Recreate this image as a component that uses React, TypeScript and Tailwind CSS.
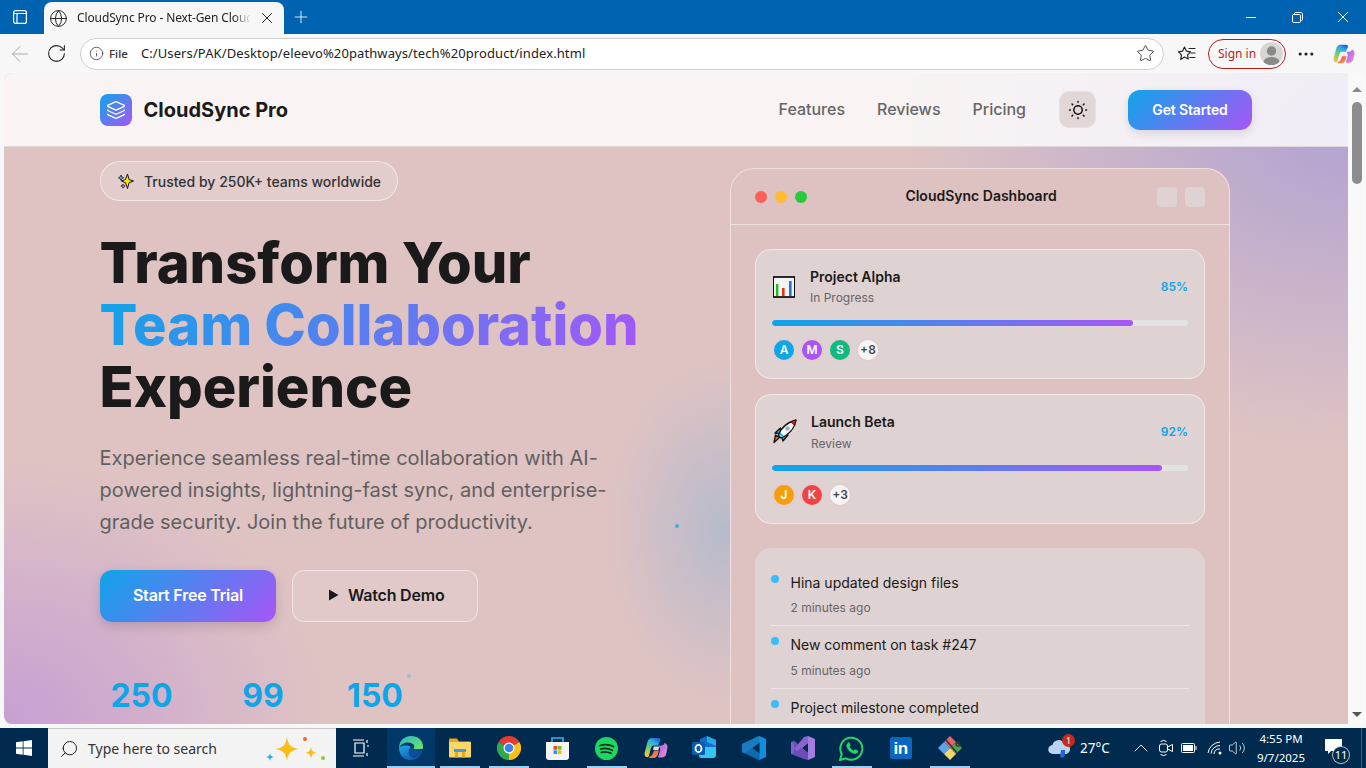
import React from "react";
import { Layers, Globe, X, Plus, ArrowLeft, RotateCw, Info, Star, MoreHorizontal, ChevronUp, Search, Volume2 } from "lucide-react";

const grad = "bg-[linear-gradient(135deg,#0ea5e9,#a855f7)]";

function SunDots() {
  return (
    <svg width="20" height="20" viewBox="0 0 20 20" fill="none" stroke="#111" strokeWidth="1.5" strokeLinecap="round">
      <circle cx="10" cy="10" r="4.2" />
      <path d="M10 1.500v.8M10 17.700v.8M1.500 10h.8M17.700 10h.8M4 4l.6.6M15.400 15.400l.6.6M4 16l.6-.6M15.400 4.600l.6-.6" />
    </svg>
  );
}

function ChartEmoji() {
  return (
    <svg width="22" height="22" viewBox="0 0 22 22">
      <rect x="0.5" y="1" width="21" height="20" fill="#f4f4f4" stroke="#111" strokeWidth="1" />
      <path d="M0 1h22M0 21h22" stroke="#111" strokeWidth="1.600" />
      <rect x="3" y="8" width="2.4" height="12" fill="#17c317" />
      <rect x="9" y="12" width="2.6" height="8" fill="#e8321a" />
      <rect x="16" y="5" width="2.6" height="15" fill="#1c74d4" />
    </svg>
  );
}

function RocketEmoji() {
  return (
    <svg width="25" height="25" viewBox="0 0 25 25">
      <path d="M7.500 18.500 L2 23.500 L3.500 16 Z" fill="#f97316" stroke="#111" strokeWidth="1.300" strokeLinejoin="round" />
      <path d="M3 14 L8.500 9 L9 15Z" fill="#14b0e6" stroke="#111" strokeWidth="1.300" strokeLinejoin="round" />
      <path d="M11 22 L16 16 L9.500 17Z" fill="#14b0e6" stroke="#111" strokeWidth="1.300" strokeLinejoin="round" />
      <path d="M6.500 16.500 C8.500 9.500 15 3.500 24 1 C22.500 10 16 16.500 9 19 Z" fill="#f4f8fa" stroke="#111" strokeWidth="1.300" strokeLinejoin="round" />
      <path d="M18.500 2.800 L24 1 L22.700 6.600 C21.500 5 20 3.800 18.500 2.800 Z" fill="#e01b1b" stroke="#111" strokeWidth="0.800" />
      <circle cx="15.500" cy="9.500" r="2.300" fill="#a7b1b8" />
      <path d="M8 14.500 L11 17.500" stroke="#14b0e6" strokeWidth="1.800" />
    </svg>
  );
}

function SparkleEmoji() {
  return (
    <svg width="16" height="17" viewBox="0 0 16 17">
      <path d="M9.500 1 L11 6.500 L15.500 8 L11 9.800 L9.500 15.500 L7.500 9.800 L3.500 8 L7.500 6.500 Z" fill="#ffe600" stroke="#111" strokeWidth="1" />
      <path d="M3 2 L3.900 4 L5.800 4.800 L3.900 5.600 L3 7.600 L2.100 5.600 L.4 4.800 L2.100 4 Z" fill="#28c6e8" stroke="#111" strokeWidth=".7" />
      <path d="M5 11 L5.700 12.400 L7.100 13 L5.700 13.700 L5 15.200 L4.200 13.700 L2.800 13 L4.200 12.400 Z" fill="#ef7fb0" stroke="#111" strokeWidth=".7" />
    </svg>
  );
}

function Avatar({ c, t, white }: { c: string; t: string; white?: boolean }) {
  return (
    <div className={`w-[24px] h-[24px] rounded-full border-2 border-[#e3cdcd] flex items-center justify-center text-[12px] font-semibold ${white ? "text-[#444]" : "text-white"} ${c}`}>{t}</div>
  );
}

function ProjectCard({ icon, name, status, pct, bar, avatars }: { icon: React.ReactNode; name: string; status: string; pct: number; bar: number; avatars: React.ReactNode }) {
  return (
    <div className="rounded-[16px] border border-white/50 bg-[#dfd2d2] p-[16px]">
      <div className="flex items-center justify-between">
        <div className="flex items-center">
          {icon}
          <div>
            <div className="text-[14px] font-semibold text-[#1a1a1a] leading-[22.4px]">{name}</div>
            <div className="text-[12px] text-[#666] leading-[19.2px]">{status}</div>
          </div>
        </div>
        <div className="text-[12px] font-semibold text-[#0ea5e9]">{pct}%</div>
      </div>
      <div className="mt-[12px] h-[6px] rounded-full bg-[#e3e3e3] overflow-hidden">
        <div className="h-full rounded-full bg-[linear-gradient(90deg,#0ea5e9,#a855f7)]" style={{ width: `${bar}%` }} />
      </div>
      <div className="flex gap-[4px] mt-[12px]">{avatars}</div>
    </div>
  );
}

function Activity({ text, time, last }: { text: string; time: string; last?: boolean }) {
  return (
    <div className={`flex gap-[12px] pb-[8px] ${last ? "" : "border-b border-white/40 mb-[8px]"}`}>
      <div className="w-[8px] h-[8px] rounded-full bg-[#38bdf8] mt-[3px] -ml-[0.5px] shrink-0" />
      <div>
        <div className="text-[14px] text-[#1a1a1a] leading-[22.4px]">{text}</div>
        <div className="text-[12px] text-[#666] leading-[19.2px] mt-[4px]">{time}</div>
      </div>
    </div>
  );
}

function TitleBar() {
  return (
    <div className="h-[34px] bg-[#0063b1] flex items-end shrink-0">
      <div className="w-[40px] h-full flex items-center justify-center mr-[4px]">
        <svg width="14" height="14" viewBox="0 0 14 14" fill="none" stroke="white" strokeWidth="1.2"><rect x=".6" y=".6" width="12.8" height="12.8" rx="2" /><path d="M.6 3.500h12.800M4 3.500v9.900" /></svg>
      </div>
      <div className="w-[240px] h-[32px] bg-[#f7f7f7] rounded-t-[8px] flex items-center pl-[5px] relative">
        <Globe size={19} strokeWidth={1.2} className="text-[#222]" />
        <div className="ml-[9px] text-[12px] text-[#222] w-[174px] whitespace-nowrap overflow-hidden tracking-[-0.12px] font-['Noto_Sans',sans-serif] [mask-image:linear-gradient(90deg,#000_90%,transparent)]">CloudSync Pro - Next-Gen Cloud Collaboration</div>
        <X size={18} strokeWidth={1.3} className="text-[#222] ml-[7px]" />
      </div>
      <div className="ml-[7px] h-full flex items-center"><Plus size={20} strokeWidth={1} className="text-white" /></div>
      <div className="flex-1" />
      <div className="h-full flex items-center text-white">
        <div className="w-[46px] flex justify-center"><svg width="10" height="10" viewBox="0 0 10 10" stroke="white"><path d="M0 5.500h10" /></svg></div>
        <div className="w-[46px] flex justify-center">
          <svg width="11" height="11" viewBox="0 0 11 11" fill="none" stroke="white"><rect x=".5" y="2.500" width="8" height="8" rx="1.200" /><path d="M2.500 2.500V1.600C2.500 1 3 .5 3.600 .5h5.400c.9 0 1.500.6 1.500 1.500v5.400c0 .6-.5 1.100-1.100 1.100H8.500" /></svg>
        </div>
        <div className="w-[46px] flex justify-center"><svg width="10" height="10" viewBox="0 0 10 10" stroke="white"><path d="M0 0l10 10M10 0 0 10" /></svg></div>
      </div>
    </div>
  );
}

function CopilotIcon({ s = 22, id = "a" }: { s?: number; id?: string }) {
  return (
    <svg width={s} height={s} viewBox="0 0 24 24">
      <defs>
        <linearGradient id={`cpa${id}`} x1="0.2" y1="1" x2="0.7" y2="0"><stop offset="0" stopColor="#f8c63c" /><stop offset="0.45" stopColor="#5fd07a" /><stop offset="0.8" stopColor="#2fa8e8" /><stop offset="1" stopColor="#2463d8" /></linearGradient>
        <linearGradient id={`cpb${id}`} x1="0" y1="0" x2="1" y2="1"><stop offset="0" stopColor="#8a6cf5" /><stop offset="0.6" stopColor="#d67bd8" /><stop offset="1" stopColor="#f59ab8" /></linearGradient>
        <linearGradient id={`cpd${id}`} x1="0" y1="0" x2="1" y2="1"><stop offset="0" stopColor="#e8483c" /><stop offset="1" stopColor="#f8a060" /></linearGradient>
      </defs>
      <path d="M8 2h6.500c1.500 0 2.200 1 1.800 2.200l-2.300 5.300H10c-1.500 0-2.500.8-3 2.500L5 19.500c-.5 1.500-1.200 2-2.500 1.500C1 20.500.3 19 .6 17L3.500 6C4.200 3.500 5.800 2 8 2Z" fill={`url(#cpa${id})`} />
      <path d="M14 9.500h3.500c1.500 0 2.500-.8 3-2.400 1.800.6 3.200 2 3 4.400l-1.200 6C21.800 20 20 21.500 17.500 21.500H14l2-7c.4-2-.3-4-2-5Z" fill={`url(#cpb${id})`} />
      <path d="M10 14.500h5l-1.500 4.500c-.8 2-2 3-4 3H6c-1 0-1.200-.5-.8-1.300 1.800-.3 2.800-1.200 3.300-2.700Z" fill={`url(#cpd${id})`} />
      <path d="M9.800 10.500h4.200c.8 0 1.200.5 1 1.200l-.7 2.300H9l.8-3.500Z" fill="#f2f0f4" opacity="0.9" />
    </svg>
  );
}

function FavIcon() {
  return (
    <svg width="19" height="18" viewBox="0 0 19 18" fill="none" stroke="#222" strokeWidth="1.200" strokeLinejoin="round">
      <path d="M7.500 2 L9.500 6.200 L13.500 6.800 L10.600 9.800 L11.300 14 L7.500 12 L3.700 14.500 L4.400 9.800 L1.500 6.800 L5.500 6.200 Z" />
      <path d="M12 3.500h6M14 8h4M13 12.500h5" strokeLinecap="round" />
    </svg>
  );
}

function Toolbar() {
  return (
    <div className="h-[39px] bg-[#f7f7f7] flex items-center shrink-0 font-['Noto_Sans',sans-serif]">
      <div className="w-[40px] flex justify-center"><ArrowLeft size={26} strokeWidth={0.9} className="text-[#a8a8a8]" /></div>
      <div className="w-[32px] flex justify-center"><RotateCw size={21} strokeWidth={1.2} className="text-[#222]" /></div>
      <div className="ml-[8px] w-[1084px] h-[32px] rounded-full bg-white border border-[#cfcfcf] flex items-center pl-[8px] pr-[8px]">
        <Info size={15} strokeWidth={1.2} className="text-[#333]" />
        <span className="ml-[5px] text-[11.5px] font-medium text-[#333]">File</span>
        <span className="ml-[13px] text-[13px] text-[#222] tracking-[0.1px]">C:/Users/PAK/Desktop/eleevo%20pathways/tech%20product/index.html</span>
        <div className="flex-1" />
        <Star size={19} strokeWidth={1} className="text-[#222]" />
      </div>
      <div className="w-[44px] flex justify-center"><FavIcon /></div>
      <div className="w-[78px] h-[30px] rounded-full border border-[#b91c1c] flex items-center pl-[9px] pr-[2px] justify-between">
        <span className="text-[12px] text-[#b91c1c]">Sign in</span>
        <div className="w-[23px] h-[23px] rounded-full bg-[#d8d6d2] overflow-hidden">
          <svg viewBox="0 0 23 23" width="23" height="23"><circle cx="11.500" cy="9" r="4.700" fill="#8a8a86" /><ellipse cx="11.500" cy="20" rx="8" ry="5" fill="#8a8a86" /></svg>
        </div>
      </div>
      <div className="w-[40px] flex justify-center"><MoreHorizontal size={20} strokeWidth={1.8} className="text-[#222]" /></div>
      <div className="w-[36px] flex justify-center"><CopilotIcon /></div>
    </div>
  );
}

function Scrollbar() {
  return (
    <div className="w-[17px] bg-[#f9f9f9] flex flex-col items-center shrink-0 rounded-tr-[8px]">
      <div className="h-[16px] mt-[8px] flex items-center"><div className="w-0 h-0 border-x-[5px] border-x-transparent border-b-[5px] border-b-[#8a8a8a]" /></div>
      <div className="w-[10px] h-[82px] rounded-full bg-[#8d8d8d] mt-[5px]" />
      <div className="flex-1" />
      <div className="h-[16px] mb-[2px] flex items-center"><div className="w-0 h-0 border-x-[5px] border-x-transparent border-t-[5px] border-t-[#555]" /></div>
    </div>
  );
}

function Nav() {
  return (
    <div className="h-[74px] px-[96px] bg-white/80 border-b border-[#dedada] flex items-center justify-between shrink-0">
      <div className="flex items-center gap-[12px]">
        <div className={`w-[32px] h-[32px] rounded-[8px] ${grad} flex items-center justify-center`}>
          <Layers size={20} strokeWidth={1.6} className="text-white" />
        </div>
        <span className="text-[20px] font-bold text-[#1a1a1a] -ml-[0.5px]">CloudSync Pro</span>
      </div>
      <div className="flex items-center">
        <span className="text-[16px] font-medium text-[#666] -mt-[2px]">Features</span>
        <span className="text-[16px] font-medium text-[#666] ml-[32px] -mt-[2px]">Reviews</span>
        <span className="text-[16px] font-medium text-[#666] ml-[32px] -mt-[2px]">Pricing</span>
        <div className="w-[37px] h-[37px] rounded-[10px] bg-[#e2d7d7] border border-[#e6dfdf] ml-[33px] flex items-center justify-center"><SunDots /></div>
        <div className={`ml-[32px] w-[124px] h-[40px] rounded-[12px] ${grad} flex items-center justify-center text-white text-[14px] font-semibold tracking-[-0.15px] shadow-[0_4px_10px_rgba(0,0,0,0.1)]`}>Get Started</div>
      </div>
    </div>
  );
}

function Hero() {
  return (
    <div className="relative flex-1 overflow-hidden px-[96px]">
      <div className="absolute left-[671px] top-[377px] w-[4px] h-[4px] rounded-full bg-[#47a7dc]" />
      <div className="absolute left-[403px] top-[527px] w-[4px] h-[4px] rounded-full bg-[#9bbbdc]" />
      <div className="grid grid-cols-2 gap-[64px]">
        <div className="pt-[14px]">
          <div className="inline-flex items-center h-[40px] rounded-full border border-white/50 bg-white/15 pl-[17px] pr-[16px]">
            <SparkleEmoji />
            <span className="ml-[10px] text-[14px] font-medium text-[#333]">Trusted by 250K+ teams worldwide</span>
          </div>
          <h1 className="mt-[31px] -ml-[0.5px] text-[56px] leading-[62px] font-extrabold text-[#1a1a1a]">
            <div>Transform Your</div>
            <div className={`${grad} bg-clip-text text-transparent w-fit`}>Team Collaboration</div>
            <div>Experience</div>
          </h1>
          <p className="mt-[24px] -ml-[0.5px] text-[20px] leading-[32px] text-[#606060] w-[520px]">Experience seamless real-time collaboration with AI-powered insights, lightning-fast sync, and enterprise-grade security. Join the future of productivity.</p>
          <div className="flex gap-[16px] mt-[32px]">
            <div className={`w-[176px] h-[52px] pb-[2px] rounded-[12px] ${grad} flex items-center justify-center text-white text-[16px] font-semibold tracking-[-0.2px] shadow-[0_4px_12px_rgba(0,0,0,0.15)]`}>Start Free Trial</div>
            <div className="w-[186px] h-[52px] pb-[2px] rounded-[12px] border border-white/50 bg-white/10 flex items-center pl-[35px] text-[#1a1a1a] text-[16px] font-semibold tracking-[-0.2px] gap-[9px]">
              <svg width="11" height="12" viewBox="0 0 11 12"><path d="M1 .5l9.500 5.500L1 11.500z" fill="#1a1a1a" /></svg>
              Watch Demo
            </div>
          </div>
          <div className="flex gap-[48px] mt-[54px] text-center text-[32px] leading-[40px] font-bold text-[#0ea5e9]">
            <div className="w-[83px]">250</div>
            <div className="w-[64px]">99</div>
            <div className="w-[64px]">150</div>
          </div>
        </div>
        <div className="pt-[21px]">
          <div className="w-[500px] mx-auto rounded-t-[24px] border border-white/50 bg-[#dec1c1]">
            <div className="h-[56px] border-b border-white/50 flex items-center px-[24px]">
              <div className="flex gap-[8px]">
                <div className="w-[12px] h-[12px] rounded-full bg-[#ff5f56]" />
                <div className="w-[12px] h-[12px] rounded-full bg-[#ffbd2e]" />
                <div className="w-[12px] h-[12px] rounded-full bg-[#27c93f]" />
              </div>
              <div className="flex-1 text-center text-[14px] font-semibold text-[#1a1a1a] pr-[2px] -mt-[2px]">CloudSync Dashboard</div>
              <div className="flex gap-[8px]">
                <div className="w-[20px] h-[20px] rounded-[4px] bg-[#dfd2d2]" />
                <div className="w-[20px] h-[20px] rounded-[4px] bg-[#dfd2d2]" />
              </div>
            </div>
            <div className="px-[24px] pt-[24px] flex flex-col">
              <ProjectCard icon={<div className="ml-[1px] mr-[15px]"><ChartEmoji /></div>} name="Project Alpha" status="In Progress" pct={85} bar={86.8} avatars={<>
                <Avatar c="bg-[#0ea5e9]" t="A" />
                <Avatar c="bg-[#a855f7]" t="M" />
                <Avatar c="bg-[#10b981]" t="S" />
                <Avatar c="bg-[#f7f5f5]" t="+8" white />
              </>} />
              <div className="h-[15.5px]" />
              <ProjectCard icon={<div className="mr-[14px]"><RocketEmoji /></div>} name="Launch Beta" status="Review" pct={92} bar={93.8} avatars={<>
                <Avatar c="bg-[#f59e0b]" t="J" />
                <Avatar c="bg-[#ef4444]" t="K" />
                <Avatar c="bg-[#f7f5f5]" t="+3" white />
              </>} />
              <div className="mt-[24.5px] rounded-[16px] bg-[#dfd2d2] px-[16px] pt-[23.6px] h-[300px]">
                <Activity text="Hina updated design files" time="2 minutes ago" />
                <Activity text="New comment on task #247" time="5 minutes ago" />
                <Activity text="Project milestone completed" time="1 hour ago" last />
              </div>
            </div>
          </div>
        </div>
      </div>
    </div>
  );
}

function WinLogo() {
  return <svg width="16" height="16" viewBox="0 0 16 16" fill="white"><path d="M0 2.300 6.700 1.300V7.600H0ZM7.500 1.200 16 0V7.600H7.500ZM0 8.400H6.700V14.700L0 13.700ZM7.500 8.400H16V16L7.500 14.800Z" /></svg>;
}

function SearchSparkles() {
  return (
    <svg width="64" height="30" viewBox="0 0 64 30">
      <path d="M26 3c1.500 8.500 3.500 10.500 12 12-8.500 1.500-10.500 3.500-12 12-1.500-8.500-3.500-10.500-12-12 8.500-1.500 10.500-3.500 12-12Z" fill="#fdbb15" />
      <path d="M9 19c.6 2.900 1.100 3.400 4 4-2.900.6-3.400 1.100-4 4-.6-2.900-1.100-3.400-4-4 2.900-.6 3.400-1.100 4-4Z" fill="#24a8ec" />
      <path d="M50 13c.8 4 1.800 5 5.700 5.700-3.900.7-4.900 1.700-5.700 5.700-.8-4-1.800-5-5.700-5.700 3.900-.7 4.900-1.700 5.700-5.700Z" fill="#fdbb15" />
      <circle cx="44" cy="5" r="2" fill="#ee6a30" />
      <circle cx="62" cy="24" r="2" fill="#8dc63f" />
    </svg>
  );
}

function TI({ children, active, w = "w-[49px]", under }: { children: React.ReactNode; active?: boolean; w?: string; under?: boolean }) {
  return (
    <div className={`${w} h-full flex items-center justify-center relative ${active ? "bg-[#00386a]" : ""}`}>
      {children}
      {under && <div className={`absolute bottom-0 h-[2px] bg-[#9fcdec] ${active ? "left-0 right-0" : "left-[5px] right-[4px]"}`} />}
    </div>
  );
}

const EdgeIcon = () => (
  <svg width="24" height="24" viewBox="0 0 24 24">
    <defs>
      <linearGradient id="eg1" x1="0" y1="0" x2="1" y2="0.7"><stop offset="0" stopColor="#2bb6c8" /><stop offset="1" stopColor="#6ade6e" /></linearGradient>
      <linearGradient id="eg2" x1="0" y1="0" x2="0.6" y2="1"><stop offset="0" stopColor="#22a6e8" /><stop offset="1" stopColor="#0c5fb4" /></linearGradient>
    </defs>
    <path d="M12 0C5 0 .3 5 0 11.500c3-5 9-6 13-4 2 1 3 3 1.500 5.500h9c.7-1 .5-2.500.5-3.500C23.500 4 18.500 0 12 0Z" fill="url(#eg1)" />
    <path d="M0 11.500C-.3 18.500 5 24 12 24c3 0 6-1 8-3-4 1.500-8 .5-9.500-2-1.500-3-.5-6 1.500-8-3-2-8-2-12 .5Z" fill="url(#eg2)" />
    <path d="M12 11c-2 2-3 5-1.500 8 1.500 2.500 5.500 3.500 9.500 2 2-2 3.500-5 3.500-8H14c-.5-1-1-1.500-2-2Z" fill="#0a4f96" />
  </svg>
);
const Explorer = () => (
  <svg width="22" height="20" viewBox="0 0 22 20"><path d="M0 2C0 1 .5.500 1.500.500H8l2 3h10.500c1 0 1.500.5 1.500 1.500v3H0Z" fill="#e8a91f" /><rect x="0" y="4" width="22" height="15.500" rx="1" fill="#fcd667" /><rect x="5" y="11" width="12" height="3" fill="#3f9be8" /><path d="M6 14h3v5.500H6ZM13 14h3v5.500h-3Z" fill="#e8a91f" /></svg>
);
const Chrome = () => (
  <svg width="24" height="24" viewBox="0 0 24 24">
    <path d="M12 12 1.600 6A12 12 0 0 1 22.400 6Z" fill="#e33b2e" />
    <path d="M12 12 1.600 6A12 12 0 0 0 12 24Z" fill="#2fa84f" />
    <path d="M12 12 22.400 6A12 12 0 0 1 12 24Z" fill="#fbc116" />
    <circle cx="12" cy="12" r="5.500" fill="#fff" /><circle cx="12" cy="12" r="4.300" fill="#3b82f0" />
  </svg>
);
const StoreIcon = () => (
  <svg width="23" height="24" viewBox="0 0 23 24">
    <path d="M6 6V2h11v4" fill="none" stroke="#29b6f6" strokeWidth="1.600" />
    <path d="M0 6h23v15a3 3 0 0 1-3 3H3a3 3 0 0 1-3-3Z" fill="#f4f4f4" />
    <path d="M7.500 10h3.700v3.700H7.500Z" fill="#ea4c2e" /><path d="M11.800 10h3.700v3.700h-3.700Z" fill="#7fba2c" /><path d="M7.500 14.300h3.700V18H7.500Z" fill="#18a4ee" /><path d="M11.800 14.300h3.700V18h-3.700Z" fill="#fdb90b" />
  </svg>
);
const Spotify = () => (
  <svg width="23" height="23" viewBox="0 0 23 23"><circle cx="11.500" cy="11.500" r="11.500" fill="#1ed760" /><path d="M5 8.500c4.500-1.300 9.500-1 13.500 1M5.700 12c3.800-1 8-.7 11.500 1.200M6.300 15.300c3.200-.8 6.700-.5 9.700 1" stroke="#0f2c1c" strokeWidth="1.800" fill="none" strokeLinecap="round" /></svg>
);
const Outlook = () => (
  <svg width="25" height="24" viewBox="0 0 25 24">
    <path d="M8 3 15 0l9 4v14a3 3 0 0 1-3 3H9Z" fill="#0f6fc6" />
    <path d="M15 0l9 4v6l-9-4Z" fill="#28a8ea" />
    <path d="M7 11l17 0v8a3 3 0 0 1-3 3H9a2 2 0 0 1-2-2Z" fill="#35c5f0" />
    <rect x="0" y="6" width="13" height="13" rx="1.500" fill="#0a5cb0" />
    <ellipse cx="6.500" cy="12.500" rx="3" ry="3.600" fill="none" stroke="white" strokeWidth="1.800" />
  </svg>
);
const VSCode = () => (
  <svg width="24" height="24" viewBox="0 0 24 24">
    <path d="M17.500 0 24 3v18l-6.500 3L6 13.500Z" fill="#0f8fe0" />
    <path d="M17.500 6.500 10 12l7.500 5.500Z" fill="#002b4f" />
    <path d="M0 8l2.500-1.500L17.500 18v6l-2-.5L0 16Z" fill="#0b6bb0" />
    <path d="M0 16l2.500 1.500L17.500 6V0l-2 .5L0 8Z" fill="#1a7cc0" />
  </svg>
);
const VS = () => (
  <svg width="24" height="24" viewBox="0 0 24 24">
    <path d="M17 0 24 3v18l-7 3L6 13.500Z" fill="#a57de0" />
    <path d="M17 7 11 12l6 5Z" fill="#002b4f" />
    <path d="M0 6l3-1.500L17 17v7l-4-1L0 18Z" fill="#6f4bb8" />
    <path d="M3 16.500 0 18V6l3 1.500Z" fill="#8460cc" />
    <path d="M17 0v7L6 15 3 13l10-12Z" fill="#8a63d0" />
  </svg>
);
const WhatsApp = () => (
  <svg width="25" height="25" viewBox="0 0 25 25">
    <path d="M1 24l1.700-6A11 11 0 1 1 7 22.300Z" fill="none" stroke="#25d366" strokeWidth="2" />
    <path d="M8.500 7c1-1 1.800-.8 2.200 0l.8 2c.2.500 0 .9-.8 1.700.9 1.800 2.300 3.100 4 3.900.9-1 1.300-1.200 1.800-1l2 1c.7.4.7 1.200 0 2.200-1 1.200-2.500 1.300-4 .8-3.500-1.100-6-3.600-7-7-.3-1.200-.1-2 1-2.600Z" fill="#25d366" />
  </svg>
);
const LinkedIn = () => (
  <div className="w-[22px] h-[22px] rounded-[2px] bg-[#0a66c2] flex items-center justify-center text-white text-[17px] font-bold font-['Liberation_Sans',sans-serif] leading-none tracking-[-0.5px]">in</div>
);
const GitApp = () => (
  <svg width="26" height="26" viewBox="0 0 26 26">
    <path d="M13 1 19 7 13 13 7 7Z" fill="#e8636a" /><path d="M1 13 7 7 13 13 7 19Z" fill="#5aa6ee" /><path d="M25 13 19 7 13 13 19 19Z" fill="#55a045" /><path d="M13 25 19 19 13 13 7 19Z" fill="#f2d56b" />
    <path d="M9 5l12 14M19 9a2 2 0 1 1 0 .1" stroke="#333" strokeWidth="1.500" fill="none" />
  </svg>
);

function Taskbar() {
  return (
    <div className="h-[40px] bg-[#002b4f] flex shrink-0 font-['Noto_Sans',sans-serif] text-white">
      <div className="w-[48px] flex items-center justify-center"><WinLogo /></div>
      <div className="w-[288px] h-full bg-[#f3f3f3] border-t border-[#c8c8c8] flex items-center pl-[11px] text-[#222]">
        <Search size={20} strokeWidth={1.2} className="-scale-x-100" />
        <span className="ml-[9px] text-[14px] text-[#333]">Type here to search</span>
        <div className="flex-1" />
        <div className="mr-[11px]"><SearchSparkles /></div>
      </div>
      <TI><svg width="18" height="18" viewBox="0 0 18 18" fill="none" stroke="white" strokeWidth="1.200"><path d="M1 1h11M1 17h11M3 4h9v10H3zM15 1v3M15 7h2M15 14v3" /></svg></TI>
      <div className="w-[2px]" />
      <TI active under w="w-[48px]"><EdgeIcon /></TI>
      <TI under><Explorer /></TI>
      <TI under><Chrome /></TI>
      <TI><StoreIcon /></TI>
      <TI under><Spotify /></TI>
      <TI><CopilotIcon s={24} id="t" /></TI>
      <TI><Outlook /></TI>
      <TI><VSCode /></TI>
      <TI><VS /></TI>
      <TI under><WhatsApp /></TI>
      <TI><LinkedIn /></TI>
      <TI under><GitApp /></TI>
      <div className="flex-1" />
      <div className="flex items-center h-full">
        <div className="w-[26px] relative mr-[7px]">
          <svg width="26" height="24" viewBox="0 0 26 24"><path d="M6 18a4.500 4.500 0 0 1-.5-9 6 6 0 0 1 11.500-1 5 5 0 0 1 2 10Z" fill="#b9d4f0" /><path d="M14 14h4v5l-2 3-3-1Z" fill="#2266dd" /></svg>
          <div className="absolute -top-[2px] right-[-2px] w-[13px] h-[13px] rounded-full bg-[#c42b1c] text-[9px] leading-[13px] text-center">1</div>
        </div>
        <span className="text-[13.500px] w-[29px] whitespace-nowrap">27°C</span>
        <div className="w-[20px]" />
        <ChevronUp size={24} strokeWidth={0.9} />
        <div className="w-[5px]" />
        <svg width="16" height="18" viewBox="0 0 16 18" fill="none" stroke="white"><rect x="1.500" y="5" width="8" height="8" rx="2" /><path d="M9.500 8 14.500 5.500v7L9.500 10M2.500 2.500a5 5 0 0 1 6 0M2.500 15.500a5 5 0 0 0 6 0" /></svg>
        <div className="w-[7px]" />
        <svg width="16" height="10" viewBox="0 0 16 10" fill="none" stroke="white"><rect x=".5" y=".5" width="13" height="9" rx="1" /><rect x="2" y="2" width="10" height="6" fill="white" stroke="none" /><path d="M15 3v4" /></svg>
        <div className="w-[10px]" />
        <svg width="16" height="14" viewBox="0 0 16 14" fill="none" stroke="white" strokeWidth="1"><path d="M1 12a13 13 0 0 1 12-11M4 12.500a9 9 0 0 1 9-8M7 13a5 5 0 0 1 6-5" /><circle cx="13" cy="12" r="1.500" fill="white" stroke="none" /></svg>
        <div className="w-[5px]" />
        <Volume2 size={18} strokeWidth={1} />
        <div className="w-[4px]" />
        <div className="w-[62px] text-center text-[11.5px] leading-[19px]">
          <div>4:55 PM</div>
          <div>9/7/2025</div>
        </div>
        <div className="w-[13px]" />
        <div className="relative w-[22px] h-full flex items-center">
          <svg width="17" height="16" viewBox="0 0 17 16" className="-mt-[3px]"><path d="M0 0h17v12H6l-3 3v-3H0Z" fill="white" /></svg>
          <div className="absolute left-[7px] top-[18px] w-[18px] h-[18px] rounded-full bg-[#002b4f] border border-white/70 text-[11px] leading-[16px] text-center">11</div>
        </div>
        <div className="w-[14px]" />
        <div className="w-[1px] h-full bg-white/25" />
        <div className="w-[4px]" />
      </div>
    </div>
  );
}

export default function App() {
  return (
    <div className="w-[1366px] h-[768px] overflow-hidden flex flex-col bg-[#f7f7f7] font-['Inter',sans-serif]">
      <TitleBar />
      <Toolbar />
      <div className="h-[651px] flex pl-[4px] pr-[1px] shrink-0">
        <div className="flex-1 min-w-0 flex flex-col rounded-tl-[8px] rounded-bl-[8px] overflow-hidden bg-[#dfc3c3] bg-[radial-gradient(ellipse_320px_260px_at_0%_100%,rgba(178,130,225,0.55),transparent),radial-gradient(ellipse_440px_320px_at_100%_8%,rgba(130,130,225,0.5),transparent),radial-gradient(ellipse_120px_170px_at_722px_457px,rgba(110,170,220,0.35),transparent)]">
          <Nav />
          <Hero />
        </div>
        <Scrollbar />
      </div>
      <div className="h-[4px] shrink-0" />
      <Taskbar />
    </div>
  );
}
